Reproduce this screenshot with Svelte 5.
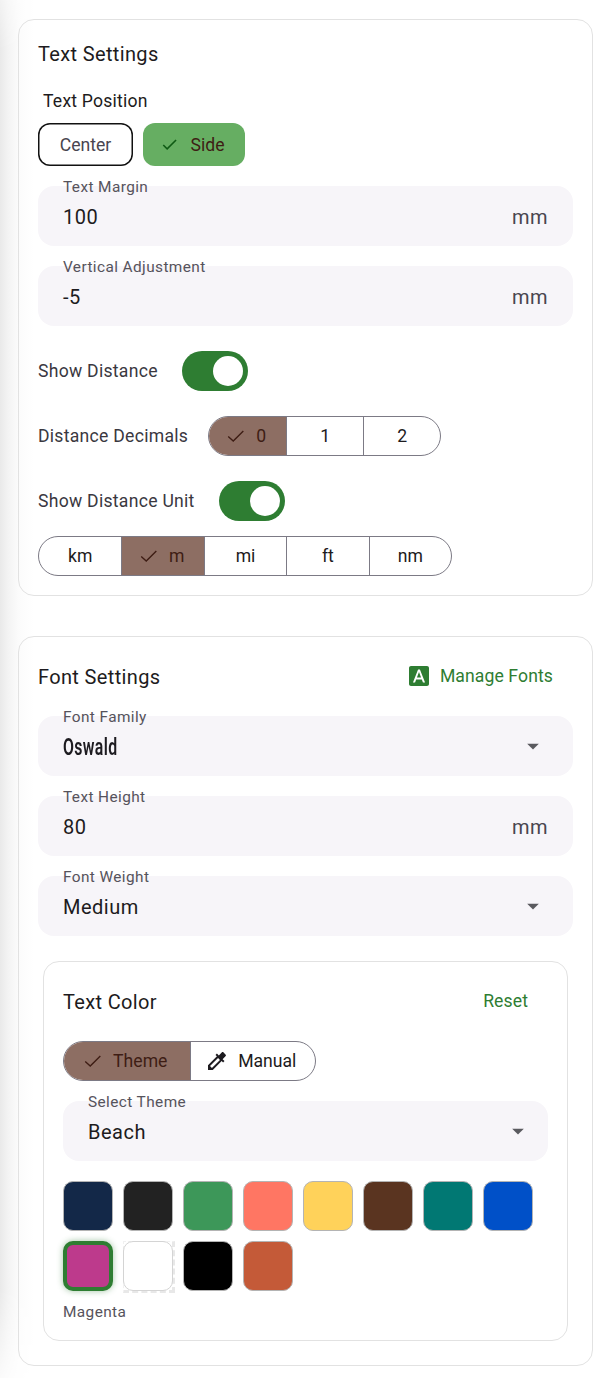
<script lang="ts">
  const colors = [
    { hex: '#132848' },
    { hex: '#222222' },
    { hex: '#3d9759' },
    { hex: '#ff7663' },
    { hex: '#ffd25a' },
    { hex: '#5a3420' },
    { hex: '#017873' },
    { hex: '#0050c8' },
    { hex: '#bd3a8c', selected: true },
    { hex: '#ffffff', blank: true },
    { hex: '#000000' },
    { hex: '#c45a38' },
  ];
  const checkPath = 'M3.5 12.5 9 17.5 20 6.5';
  const arrowPath = 'M7 10l5 5 5-5z';
</script>

<div class="shade"></div>

<main class="page">
  <section class="card first">
    <h2 class="title">Text Settings</h2>
    <div class="sub">Text Position</div>
    <div class="chips">
      <button class="chip">Center</button>
      <button class="chip on">
        <svg viewBox="0 0 24 24" width="19" height="19"><path fill="#0f5a14" d="M9 16.17 4.83 12l-1.42 1.41L9 19 21 7l-1.41-1.41z" /></svg>
        Side
      </button>
    </div>

    <div class="field">
      <span class="label">Text Margin</span>
      <span class="value">100</span>
      <span class="suffix">mm</span>
    </div>
    <div class="field">
      <span class="label">Vertical Adjustment</span>
      <span class="value">-5</span>
      <span class="suffix">mm</span>
    </div>

    <div class="row toggle-row">
      <span class="row-label">Show Distance</span>
      <span class="toggle"><span class="thumb"></span></span>
    </div>
    <div class="row decimals">
      <span class="row-label">Distance Decimals</span>
      <div class="seg w233">
        <button class="on">
          <svg viewBox="0 0 24 24" width="22" height="22"><path fill="none" stroke="currentColor" stroke-width="1.5" d={checkPath} /></svg>
          0
        </button>
        <button>1</button>
        <button>2</button>
      </div>
    </div>
    <div class="row unit">
      <span class="row-label">Show Distance Unit</span>
      <span class="toggle"><span class="thumb"></span></span>
    </div>
    <div class="seg w414">
      <button>km</button>
      <button class="on">
        <svg viewBox="0 0 24 24" width="22" height="22"><path fill="none" stroke="currentColor" stroke-width="1.5" d={checkPath} /></svg>
        m
      </button>
      <button>mi</button>
      <button>ft</button>
      <button>nm</button>
    </div>
  </section>

  <section class="card second">
    <div class="head">
      <h2 class="title">Font Settings</h2>
      <button class="link">
        <svg viewBox="0 0 24 24" width="24" height="24"><path fill="#2e7d32" d="M9.93 13.5h4.14L12 7.98 9.93 13.5zM20 2H4c-1.1 0-2 .9-2 2v16c0 1.1.9 2 2 2h16c1.1 0 2-.9 2-2V4c0-1.1-.9-2-2-2zm-4.05 16.5l-1.14-3H9.17l-1.12 3H5.96l5.11-13h1.86l5.11 13h-2.09z" /></svg>
        Manage Fonts
      </button>
    </div>

    <div class="field">
      <span class="label">Font Family</span>
      <span class="value oswald">Oswald</span>
      <svg class="arrow" viewBox="0 0 24 24" width="28" height="28"><path d={arrowPath} /></svg>
    </div>
    <div class="field">
      <span class="label">Text Height</span>
      <span class="value">80</span>
      <span class="suffix">mm</span>
    </div>
    <div class="field">
      <span class="label">Font Weight</span>
      <span class="value">Medium</span>
      <svg class="arrow" viewBox="0 0 24 24" width="28" height="28"><path d={arrowPath} /></svg>
    </div>

    <div class="inner">
      <div class="head inner-head">
        <h3 class="title">Text Color</h3>
        <button class="link reset">Reset</button>
      </div>
      <div class="seg w253">
        <button class="on">
          <svg viewBox="0 0 24 24" width="22" height="22"><path fill="none" stroke="currentColor" stroke-width="1.5" d={checkPath} /></svg>
          Theme
        </button>
        <button>
          <svg viewBox="0 0 24 24" width="24" height="24"><path fill="#1d1b20" d="M20.71 5.63l-2.34-2.34c-.39-.39-1.02-.39-1.41 0l-3.12 3.12-1.93-1.91-1.41 1.41 1.42 1.42L3 16.25V21h4.75l8.92-8.92 1.42 1.42 1.41-1.41-1.92-1.92 3.12-3.12c.4-.4.4-1.03.01-1.42zM6.92 19L5 17.08l8.06-8.06 1.92 1.92L6.92 19z" /></svg>
          Manual
        </button>
      </div>
      <div class="field">
        <span class="label">Select Theme</span>
        <span class="value">Beach</span>
        <svg class="arrow" viewBox="0 0 24 24" width="28" height="28"><path d={arrowPath} /></svg>
      </div>
      <div class="swatches">
        {#each colors as c}
          <span class="swatch" class:selected={c.selected} class:blank={c.blank} style="background-color: {c.hex}"></span>
        {/each}
      </div>
      <div class="caption">Magenta</div>
    </div>
  </section>
</main>

<style>
  :global(body) {
    background: #fff;
    font-family: Roboto, sans-serif;
    color: #1d1b20;
  }

  .shade {
    position: absolute;
    top: 0;
    left: 0;
    width: 34px;
    height: 1378px;
    background: linear-gradient(to right, #e9e9e9, #f3f3f3 8px, #fbfbfb 18px, #fff);
    mask-image: linear-gradient(to bottom, rgba(0, 0, 0, 0.6), #000 50px, #000 1290px, rgba(0, 0, 0, 0.2));
  }

  .page {
    position: relative;
    padding: 19px 19px 12px 18px;
    display: flex;
    flex-direction: column;
    gap: 40px;
  }

  .card {
    border: 1px solid #e2e2e2;
    border-radius: 16px;
    padding: 19px;
  }

  .title {
    margin: 0;
    font-size: 20px;
    font-weight: 450;
    line-height: 30px;
    letter-spacing: 0.35px;
    color: #1d1b20;
  }

  .sub {
    margin: 20px 0 0 5px;
    font-size: 17.6px;
    font-weight: 450;
    line-height: 24px;
    letter-spacing: 0.2px;
  }

  .chips {
    display: flex;
    gap: 10px;
    margin-top: 10px;
    margin-bottom: 20px;
  }

  button {
    font-family: inherit;
    border: none;
    background: none;
    cursor: pointer;
    padding: 0;
  }

  .chip {
    height: 43px;
    width: 95px;
    border-radius: 12px;
    box-shadow: inset 0 0 0 1.5px #111;
    font-size: 17.6px;
    font-weight: 450;
    color: #49454f;
    background: #fff;
  }

  .chip.on {
    width: 102px;
    box-shadow: none;
    padding-right: 4px;
    background: #66ae62;
    color: #3e1d14;
    display: flex;
    align-items: center;
    justify-content: center;
    gap: 12px;
  }

  .field {
    position: relative;
    height: 60px;
    background: #f7f5f9;
    border-radius: 16px;
    display: flex;
    align-items: center;
    justify-content: space-between;
    padding: 1px 25px 0;
    box-sizing: border-box;
    margin-bottom: 20px;
  }

  .label {
    position: absolute;
    left: 25px;
    top: -7px;
    font-size: 15.4px;
    line-height: 16px;
    letter-spacing: 0.4px;
    color: #56535c;
  }

  .value {
    font-size: 20px;
    letter-spacing: 0.5px;
    line-height: 24px;
    color: #1d1b20;
  }

  .oswald {
    font-weight: 600;
    font-size: 23.5px;
    transform: scaleX(0.675);
    transform-origin: left center;
  }

  .suffix {
    font-size: 20px;
    letter-spacing: 0.5px;
    color: #49454f;
  }

  .arrow {
    position: absolute;
    right: 26px;
    top: 16px;
    fill: #5a5a5f;
  }

  .inner .arrow {
    right: 16px;
  }

  .row {
    display: flex;
    align-items: center;
    height: 40px;
  }

  .row-label {
    font-size: 17.6px;
    letter-spacing: 0.27px;
    color: #3a383f;
  }

  .toggle-row {
    margin-top: 25px;
  }

  .toggle-row .toggle,
  .unit .toggle {
    margin-left: 24px;
  }

  .decimals {
    margin-top: 25px;
  }

  .decimals .seg {
    margin-left: 20px;
  }

  .unit {
    margin-top: 25px;
  }

  .toggle {
    width: 66px;
    height: 40px;
    border-radius: 20px;
    background: #2e7d32;
    position: relative;
    flex: none;
  }

  .thumb {
    position: absolute;
    right: 5px;
    top: 5px;
    width: 30px;
    height: 30px;
    border-radius: 50%;
    background: #fff;
  }

  .seg {
    display: grid;
    grid-auto-flow: column;
    grid-auto-columns: 1fr;
    height: 40px;
    box-sizing: border-box;
    border: 1px solid #7c7a85;
    border-radius: 20px;
    overflow: hidden;
    background: #fff;
  }

  .seg button {
    display: flex;
    align-items: center;
    justify-content: center;
    gap: 9px;
    font-size: 17.6px;
    font-weight: 450;
    color: #1d1b20;
    border-left: 1px solid #7c7a85;
  }

  .seg button:first-child {
    border-left: none;
  }

  .seg button:has(svg) {
    padding-right: 4px;
  }

  .seg button.on {
    background: #8d6e63;
    color: #3e1d14;
  }

  .w233 {
    width: 233px;
  }

  .w414 {
    width: 414px;
    margin-top: 15px;
  }

  .w253 {
    width: 253px;
  }

  .second {
    padding-bottom: 24px;
  }

  .head {
    display: flex;
    align-items: center;
    justify-content: space-between;
  }

  .second > .head {
    height: 42px;
    margin-bottom: 18px;
  }

  .link {
    display: flex;
    align-items: center;
    gap: 9px;
    margin-right: 20px;
    margin-bottom: 2px;
    color: #2e7d32;
    font-size: 17.6px;
    font-weight: 450;
    letter-spacing: 0.1px;
  }

  .inner {
    margin: 25px 5px 0;
    border: 1px solid #e2e2e2;
    border-radius: 16px;
    padding: 25px 19px 18px;
  }

  .inner-head {
    margin-bottom: 24px;
  }

  .inner .field {
    margin-top: 20px;
    margin-bottom: 20px;
  }

  .swatches {
    display: flex;
    flex-wrap: wrap;
    gap: 10px;
  }

  .swatch {
    position: relative;
    box-sizing: border-box;
    width: 50px;
    height: 50px;
    border-radius: 10px;
    border: 1px solid #b4b4b4;
  }

  .swatch.selected {
    border: 4px solid #2e7d32;
    box-shadow: 0 0 6px rgba(46, 125, 50, 0.45);
  }

  .swatch.blank {
    border-color: #d4d4d4;
  }

  .swatch.blank::after {
    content: '';
    position: absolute;
    inset: -1px -3px -3px -1px;
    z-index: -1;
    border: 3px dashed #e8e8e8;
    border-top: 1px dashed #f1f1f1;
    border-left: 1px dashed #f1f1f1;
  }

  .caption {
    margin-top: 11px;
    font-size: 15.4px;
    line-height: 20px;
    letter-spacing: 0.4px;
    color: #56535c;
  }
</style>
